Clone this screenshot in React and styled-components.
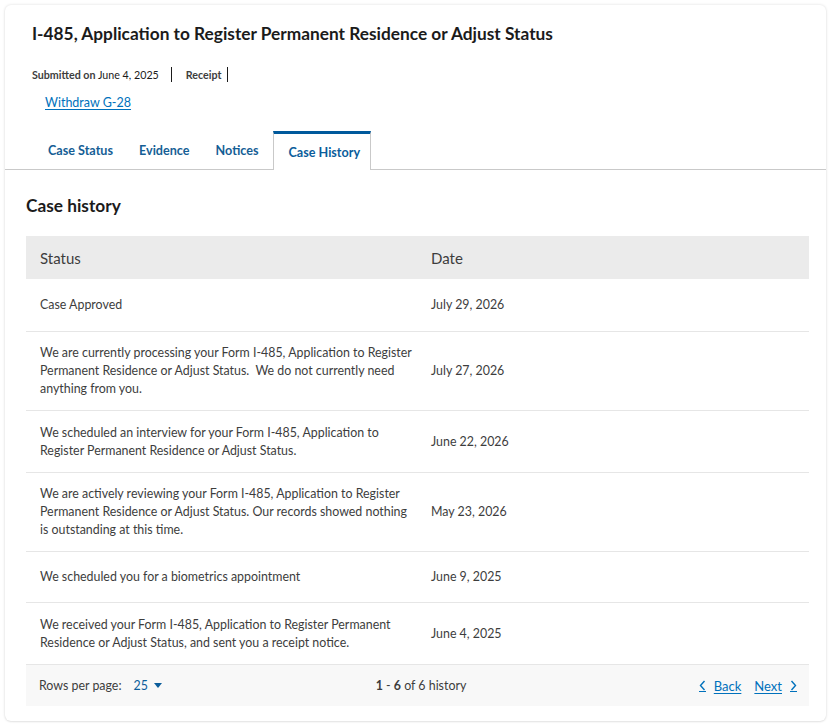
import React from "react";
import styled, { createGlobalStyle } from "styled-components";

const Global = createGlobalStyle`
  html, body { margin: 0; padding: 0; background: #ffffff; }
  body { font-family: "Lato", "Liberation Sans", sans-serif; color: #1b1b1b; }
  * { box-sizing: border-box; }
`;

const Page = styled.div`
  padding: 5px 6px 5px 5px;
`;

const Card = styled.div`
  background: #fff;
  border-radius: 6px;
  box-shadow: 0 0 3px rgba(0, 0, 0, 0.14), 0 1px 2px rgba(0, 0, 0, 0.06);
  height: 716px;
  display: flex;
  flex-direction: column;
`;

const Header = styled.div`
  padding: 19px 27px 0 27px;
`;

const Title = styled.h1`
  margin: 0;
  font-size: 17.3px;
  font-weight: 700;
  line-height: 20px;
  color: #1b1b1b;
`;

const Meta = styled.div`
  display: flex;
  align-items: center;
  margin-top: 23px;
  font-size: 10.7px;
  line-height: 14px;
  color: #1b1b1b;
`;

const MetaItem = styled.span`
  padding-right: 12px;
  margin-right: 14px;
  border-right: 1px solid #1b1b1b;
  line-height: 15px;
  &:last-child { margin-right: 0; padding-right: 6px; }
  b { font-weight: 700; color: #3d3d3d; }
`;

const LinkRow = styled.div`
  padding: 9px 0 0 13px;
`;

const TextLink = styled.a`
  color: #0071bc;
  font-size: 12.5px;
  text-decoration: underline;
  text-underline-offset: 2px;
  cursor: pointer;
`;

const TabBar = styled.div`
  display: flex;
  align-items: flex-end;
  margin-top: 21px;
  padding-left: 24px;
  border-bottom: 1px solid #c9c9c9;
  height: 39px;
`;

const Tab = styled.div`
  font-size: 12.6px;
  font-weight: 700;
  color: #155e95;
  padding: 0 13px 11px 13px;
  &:first-child { padding-left: 19px; }
  ${(p) =>
    p.$active
      ? `
    color: #0b5d9b;
    border-top: 3px solid #00599c;
    border-left: 1px solid #c9c9c9;
    border-right: 1px solid #c9c9c9;
    margin-bottom: -1px;
    background: #fff;
    height: 39px;
    padding: 11px 10px 9px 14px;
    margin-left: 2px;
  `
      : ""}
`;

const Body = styled.div`
  padding: 24px 17px 0 21px;
`;

const SectionTitle = styled.h2`
  margin: 0 0 18px 0;
  font-size: 17.3px;
  font-weight: 700;
  line-height: 24px;
  color: #1b1b1b;
`;

const Table = styled.div`
  display: flex;
  flex-direction: column;
`;

const HeadRow = styled.div`
  display: grid;
  grid-template-columns: 391px 1fr;
  background: #ebebeb;
  height: 43px;
  align-items: center;
  padding-left: 14px;
  font-size: 15px;
  color: #3d3d3d;
`;

const Row = styled.div`
  display: grid;
  grid-template-columns: 391px 1fr;
  align-items: center;
  padding: 0 0 0 14px;
  min-height: ${(p) => p.$h}px;
  border-top: ${(p) => (p.$first ? "0" : "1px solid #e6e6e6")};
  font-size: 12.4px;
  line-height: 18px;
  color: #3d3d3d;
`;

const StatusCell = styled.div`
  padding-right: 16px;
`;

const DateCell = styled.div`
  font-size: 12.4px;
`;

const Footer = styled.div`
  display: grid;
  grid-template-columns: 1fr auto 1fr;
  align-items: center;
  height: 42px;
  background: #f8f8f8;
  border-top: 1px solid #e6e6e6;
  padding: 0 12px 0 13px;
  font-size: 12.4px;
  color: #3d3d3d;
`;

const RowsPer = styled.div`
  display: flex;
  align-items: center;
  gap: 12px;
`;

const Select = styled.span`
  display: inline-flex;
  align-items: center;
  gap: 6px;
  color: #0b5d9b;
`;

const Caret = styled.span`
  width: 0;
  height: 0;
  border-left: 4px solid transparent;
  border-right: 4px solid transparent;
  border-top: 5px solid #0b5d9b;
`;

const Count = styled.div`
  padding-left: 6px;
  b { font-weight: 700; }
`;

const Pager = styled.div`
  display: flex;
  justify-content: flex-end;
  align-items: center;
  gap: 13px;
`;

const PageLink = styled.a`
  display: inline-flex;
  align-items: center;
  gap: 8px;
  color: #0071bc;
  font-size: 13px;
  text-decoration: underline;
  text-underline-offset: 2px;
  cursor: pointer;
`;

const Chevron = ({ dir }) => (
  <svg width="7" height="12" viewBox="0 0 7 12" style={{ display: "block" }}>
    <path
      d={dir === "left" ? "M5.5 1 L1.5 5.5 L5.5 10" : "M1.5 1 L5.5 5.5 L1.5 10"}
      fill="none"
      stroke="#0071bc"
      strokeWidth="1.4"
    />
    <line x1="0" y1="11.5" x2="7" y2="11.5" stroke="#0071bc" strokeWidth="1" />
  </svg>
);

const rows = [
  { s: "Case Approved", d: "July 29, 2026", h: 52 },
  {
    s: "We are currently processing your Form I-485, Application to Register Permanent Residence or Adjust Status.\u00a0 We do not currently need anything from you.",
    d: "July 27, 2026",
    h: 79,
  },
  {
    s: "We scheduled an interview for your Form I-485, Application to Register Permanent Residence or Adjust Status.",
    d: "June 22, 2026",
    h: 62,
  },
  {
    s: "We are actively reviewing your Form I-485, Application to Register Permanent Residence or Adjust Status. Our records showed nothing is outstanding at this time.",
    d: "May 23, 2026",
    h: 79,
  },
  { s: "We scheduled you for a biometrics appointment", d: "June 9, 2025", h: 51 },
  {
    s: "We received your Form I-485, Application to Register Permanent Residence or Adjust Status, and sent you a receipt notice.",
    d: "June 4, 2025",
    h: 62,
  },
];

export default function App() {
  return (
    <>
      <Global />
      <Page>
        <Card>
          <Header>
            <Title>I-485, Application to Register Permanent Residence or Adjust Status</Title>
            <Meta>
              <MetaItem>
                <b>Submitted on</b> June 4, 2025
              </MetaItem>
              <MetaItem>
                <b>Receipt</b>
              </MetaItem>
            </Meta>
            <LinkRow>
              <TextLink>Withdraw G-28</TextLink>
            </LinkRow>
          </Header>
          <TabBar>
            <Tab>Case Status</Tab>
            <Tab>Evidence</Tab>
            <Tab>Notices</Tab>
            <Tab $active>Case History</Tab>
          </TabBar>
          <Body>
            <SectionTitle>Case history</SectionTitle>
            <Table>
              <HeadRow>
                <div>Status</div>
                <div>Date</div>
              </HeadRow>
              {rows.map((r, i) => (
                <Row key={i} $h={r.h} $first={i === 0}>
                  <StatusCell>{r.s}</StatusCell>
                  <DateCell>{r.d}</DateCell>
                </Row>
              ))}
              <Footer>
                <RowsPer>
                  <span>Rows per page:</span>
                  <Select>
                    25 <Caret />
                  </Select>
                </RowsPer>
                <Count>
                  <b>1</b> - <b>6</b> of 6 history
                </Count>
                <Pager>
                  <PageLink>
                    <Chevron dir="left" />
                    <span>Back</span>
                  </PageLink>
                  <PageLink>
                    <span>Next</span>
                    <Chevron dir="right" />
                  </PageLink>
                </Pager>
              </Footer>
            </Table>
          </Body>
        </Card>
      </Page>
    </>
  );
}
